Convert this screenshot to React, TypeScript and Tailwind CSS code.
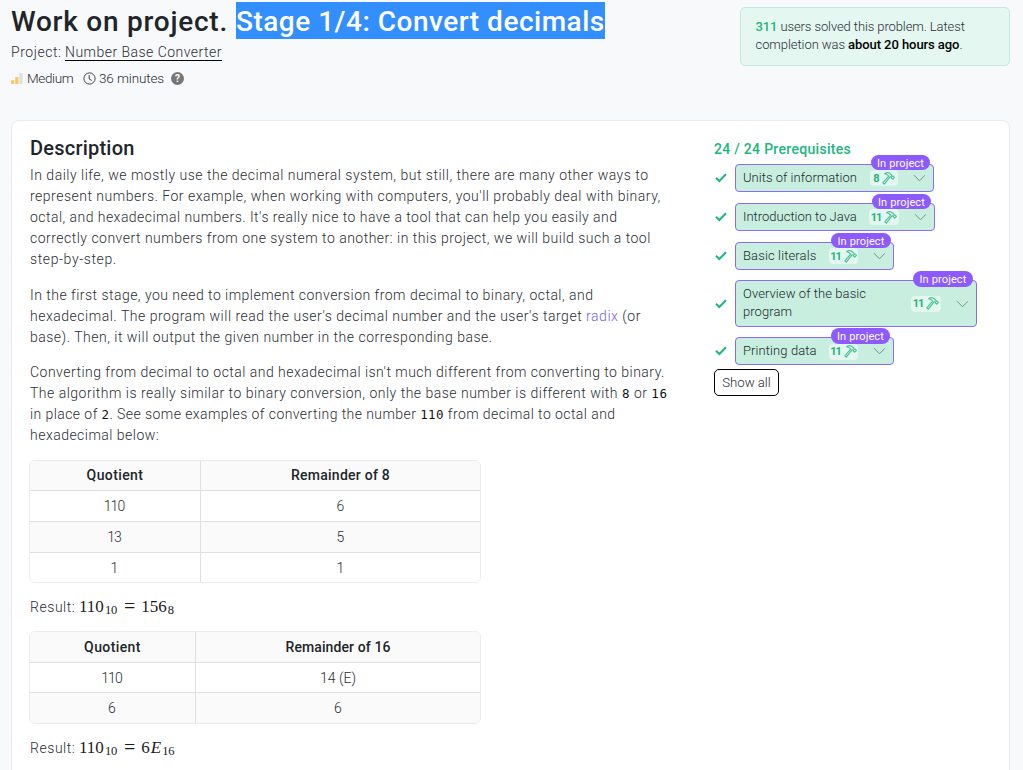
import type { ReactNode } from "react";

function Line({ children, className = "" }: { children: ReactNode; className?: string }) {
  return <span className={"block whitespace-nowrap " + className}>{children}</span>;
}

function Code({ children }: { children: ReactNode }) {
  return <code className="font-['DejaVu_Sans_Mono',monospace] text-[12.5px] leading-none font-normal text-[#111]">{children}</code>;
}

function Hammer() {
  return (
    <svg width="13" height="13" viewBox="0 0 13 13" fill="none" stroke="#45c295" strokeWidth="1.1" strokeLinejoin="round" strokeLinecap="round">
      <path d="M2.6 1.8C4.8.3 7.2.5 8.6 2L9.8 3.2 9.9 4.1 10.6 4.4 11.2 4 12.4 5.3 10.7 7.2 9.4 6 9.4 5.2 8.2 4.7 2.3 12.2.8 10.8 6.7 4.1C5.8 2.7 4.4 2.1 2.6 1.8Z" />
    </svg>
  );
}

type Item = { name: ReactNode; count: string; text: string; chip: string; pill: string; row: string; badge: string };

const items: Item[] = [
  { name: "Units of information", count: "8", text: "tracking-[0.03px]", chip: "w-[199px] h-7", pill: "w-7", row: "mb-[11px]", badge: "h-[15px] w-[59px] right-[3px]" },
  { name: "Introduction to Java", count: "11", text: "", chip: "w-[200px] h-7", pill: "w-[30px]", row: "mb-[11px]", badge: "h-[15px] w-[59px] right-[3px]" },
  { name: "Basic literals", count: "11", text: "tracking-[0.13px]", chip: "w-[159px] h-7", pill: "w-[29px]", row: "mb-[10px]", badge: "h-[15px] w-[60px] right-[2px]" },
  { name: <>Overview of the basic<br />program</>, count: "11", text: "tracking-[0.08px] pb-px", chip: "w-[242px] h-[47px]", pill: "w-[30px]", row: "mb-[10px]", badge: "h-[16px] w-[60px] right-[3px]" },
  { name: "Printing data", count: "11", text: "tracking-[0.09px]", chip: "w-[159px] h-7", pill: "w-[29px] mt-px", row: "mb-[4px]", badge: "h-[16px] w-[59px] right-[3px]" },
];

function Prerequisite({ item }: { item: Item }) {
  return (
    <div className={"flex items-center " + item.row}>
      <svg className="mr-[8px] ml-[1px]" width="12" height="10" viewBox="0 0 12 10" fill="none" stroke="#21b580" strokeWidth="2">
        <path d="M1 4.8 4.3 8 11 1.3" />
      </svg>
      <div className={"relative flex items-center rounded-[4px] border border-[#8c6bf2] bg-[#c8eee0] pl-[7px] text-[13px] leading-[18px] text-[#20282c] " + item.chip}>
        <span className={"whitespace-nowrap " + item.text}>{item.name}</span>
        <span className={"absolute right-[35px] flex h-[16px] items-center justify-center gap-[2px] rounded-[4px] bg-[#e3f6ef] text-[11px] font-bold text-[#21b580] " + item.pill}>
          <span className={item.count.length > 1 ? "mr-px pt-px tracking-[-1px]" : "pt-px"}>{item.count}</span>
          <Hammer />
        </span>
        <svg className="absolute right-[8px]" width="12" height="8" viewBox="0 0 12 8" fill="none" stroke="#789388" strokeWidth="1">
          <path d="M1 1.2 6.5 6.8 12 1.2" />
        </svg>
        <span className={"absolute -top-[10px] flex items-center justify-center rounded-full bg-[#8c5aff] pt-px text-[11px] leading-none font-normal tracking-[0.13px] whitespace-nowrap text-white " + item.badge}>
          In project
        </span>
      </div>
    </div>
  );
}

type TableProps = { head: string[]; rows: string[][]; cols: string; heights: string[]; headText: string };

function Table({ head, rows, cols, heights, headText }: TableProps) {
  return (
    <div className="-ml-px w-[452px] overflow-hidden rounded-[6px] border border-[#ececec] text-[14px] leading-[20px]">
      {[head, ...rows].map((r, i) => (
        <div key={i} className={"grid " + cols + " " + heights[i] + (i ? " border-t border-[#dfe0e4]" : " font-medium text-[#212529]") + (i % 2 ? " bg-white" : " bg-[#fafafa]")}>
          <div className={"flex items-center justify-center border-r border-[#dfe0e4] " + (i ? "pr-[2px] tracking-[-1px]" : "pb-px tracking-[0.4px]")}>{r[0]}</div>
          <div className={"flex items-center justify-center " + (i ? "" : "pb-px " + headText)}>{r[1]}</div>
        </div>
      ))}
    </div>
  );
}

function Sub({ children }: { children: ReactNode }) {
  return <span className="ml-px pt-[7px] text-[12.5px] tracking-[-0.2px]">{children}</span>;
}

function Result({ children }: { children: ReactNode }) {
  return (
    <div className="mt-[13px] flex h-[21px] items-center">
      <span className="w-[49px] pt-px tracking-[0.55px]">Result:</span>
      <span className="flex h-[21px] items-center font-['Liberation_Serif',serif] text-[17px] leading-[21px] font-normal text-[#1b1b1b]">{children}</span>
    </div>
  );
}

function Equals() {
  return <span className="mr-[6px] ml-[7px] text-[20px]">=</span>;
}

export default function App() {
  return (
    <div className="h-[770px] w-[1023px] overflow-hidden bg-[#f8f9fb] font-[Roboto,sans-serif] font-light text-[#2a2e34]">
      <header className="flex h-[120px] justify-between pr-[13px] pl-[11px]">
        <div>
          <h1 className="mt-[2px] flex h-[37px] items-center gap-[8px] text-[28px] font-medium whitespace-nowrap text-[#212529]">
            <span className="w-[217px] pt-[2px] tracking-[0.75px]">Work on project.</span>
            <span className="flex h-[37px] w-[369px] items-center bg-[#338fff] pt-[2px] tracking-[0.5px] text-white">Stage 1/4: Convert decimals</span>
          </h1>
          <div className="mt-[4px] flex h-[19px] items-center text-[14px] whitespace-nowrap">
            <span className="w-[54px] tracking-[0.54px]">Project:</span>
            <span className="border-b border-black leading-[15px] tracking-[0.47px]">Number Base Converter</span>
          </div>
          <div className="mt-[7px] flex h-[18px] items-center text-[13.5px] whitespace-nowrap">
            <svg className="mt-px" width="12" height="11" viewBox="0 0 12 11"><path fill="#fdc766" d="M0 7.3h3.3V11H0zM4.2 4h3.3v7H4.2z" /><path fill="#dedfe1" d="M8.3 0h3.3v11H8.3z" /></svg>
            <span className="ml-1 w-[47px] tracking-[-0.35px]">Medium</span>
            <svg className="ml-[9px]" width="13" height="13" viewBox="0 0 13 13" fill="none" stroke="#444" strokeWidth="1"><circle cx="6.5" cy="6.5" r="5.6" /><path d="M6.2 3v4l2.5 1.5" /></svg>
            <span className="ml-[3px] w-[65px] tracking-[-0.12px]">36 minutes</span>
            <span className="ml-[7px] flex size-[13px] items-center justify-center rounded-full bg-[#777] text-[10px] font-bold text-white">?</span>
          </div>
        </div>
        <div className="mt-[7px] h-[59px] w-[270px] rounded-[5px] border border-[#bfecdc] bg-[#e4f7f0] pt-[10px] pl-[14.5px] text-[13px] leading-[18px]">
          <Line className="tracking-[-0.1px]"><b className="font-medium text-[#21b580]">311</b> users solved this problem. Latest</Line>
          <Line className="tracking-[-0.07px]">completion was <b className="font-medium text-black">about 20 hours ago</b>.</Line>
        </div>
      </header>
      <main className="ml-[11px] flex h-[660px] w-[999px] rounded-t-[8px] border border-[#ebebeb] bg-white pt-[16px] pl-[18px]">
        <section className="w-[684px] text-[14px] leading-[21px]">
          <h2 className="h-[28px] text-[20px] leading-[23px] font-medium tracking-[0.22px] text-[#212529]">Description</h2>
          <p className="mb-[15px]">
            <Line className="tracking-[0.505px]">In daily life, we mostly use the decimal numeral system, but still, there are many other ways to</Line>
            <Line className="tracking-[0.5px]">represent numbers. For example, when working with computers, you'll probably deal with binary,</Line>
            <Line className="tracking-[0.46px]">octal, and hexadecimal numbers. It's really nice to have a tool that can help you easily and</Line>
            <Line className="tracking-[0.485px]">correctly convert numbers from one system to another: in this project, we will build such a tool</Line>
            <Line className="tracking-[0.6px]">step-by-step.</Line>
          </p>
          <p className="mb-[14px]">
            <Line className="tracking-[0.475px]">In the first stage, you need to implement conversion from decimal to binary, octal, and</Line>
            <Line className="tracking-[0.515px]">hexadecimal. The program will read the user's decimal number and the user's target <span className="text-[#7465e6]">radix</span> (or</Line>
            <Line className="tracking-[0.5px]">base). Then, it will output the given number in the corresponding base.</Line>
          </p>
          <p className="mb-[14px]">
            <Line className="tracking-[0.475px]">Converting from decimal to octal and hexadecimal isn't much different from converting to binary.</Line>
            <Line className="tracking-[0.495px]">The algorithm is really similar to binary conversion, only the base number is different with <Code>8</Code> or <Code>16</Code></Line>
            <Line className="tracking-[0.425px]">in place of <Code>2</Code>. See some examples of converting the number <Code>110</Code> from decimal to octal and</Line>
            <Line className="tracking-[0.475px]">hexadecimal below:</Line>
          </p>
          <Table head={["Quotient", "Remainder of 8"]} rows={[["110", "6"], ["13", "5"], ["1", "1"]]} cols="grid-cols-[171px_1fr]" heights={["h-[29px]", "h-[31px]", "h-[31px]", "h-[30px]"]} headText="tracking-[0.25px]" />
          <Result>110<Sub>10</Sub><Equals />156<Sub>8</Sub></Result>
          <div className="h-[14px]" />
          <Table head={["Quotient", "Remainder of 16"]} rows={[["110", "14 (E)"], ["6", "6"]]} cols="grid-cols-[166px_1fr]" heights={["h-[30px]", "h-[30px]", "h-[31px]"]} headText="tracking-[0.1px]" />
          <Result>110<Sub>10</Sub><Equals />6<i className="ml-[1px]">E</i><Sub>16</Sub></Result>
        </section>
        <aside className="pt-[2px]">
          <h3 className="h-[25px] text-[14px] leading-[21px] font-medium tracking-[0.3px] text-[#21b580]">24 / 24 Prerequisites</h3>
          {items.map((item, i) => <Prerequisite key={i} item={item} />)}
          <button className="flex h-[27px] w-[65px] items-center justify-center rounded-[5px] border border-black text-[13.2px] whitespace-nowrap">Show all</button>
        </aside>
      </main>
    </div>
  );
}
